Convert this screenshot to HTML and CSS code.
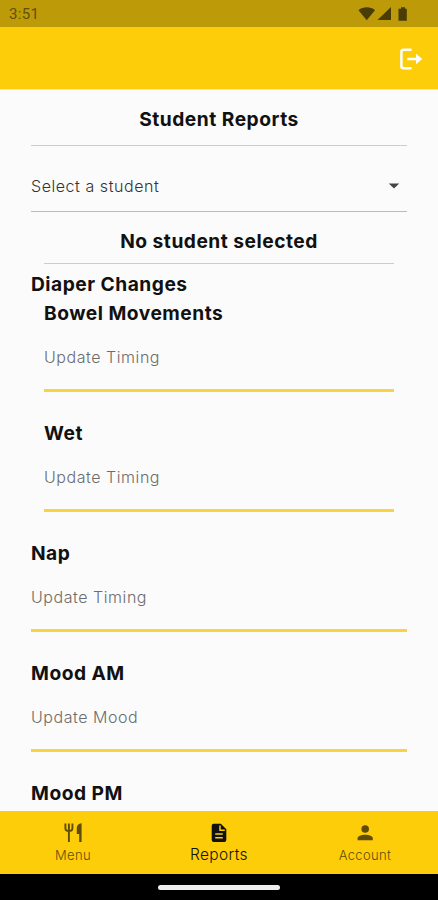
FILE: index.html
```html
<!DOCTYPE html>
<html lang="en">
<head>
    <meta charset="UTF-8">
    <meta name="viewport" content="width=device-width, initial-scale=1.0">
    <title>Student Reports</title>
    <link rel="stylesheet" href="styles.css">
</head>
<body>
    <div class="status-bar">
        <span class="clock">3:51</span>
        <svg class="status-icons" width="52" height="16" viewBox="0 0 52 16">
            <path d="M0.5 4.2C5 0.4 12.5 0.4 17 4.2L8.7 14.2Z"/>
            <path d="M19.5 14L33 1V14Z"/>
            <path d="M43 1.2h4v1.5h1.8v12H40.5v-12H43z"/>
        </svg>
    </div>
    <header class="app-bar">
        <button class="logout" aria-label="Log out">
            <svg width="24" height="24" viewBox="0 0 24 24">
                <path d="M12.6 2.8H4.4Q2.4 2.8 2.4 4.8V19.2Q2.4 21.2 4.4 21.2H12.6" fill="none" stroke="#fff" stroke-width="2.5"/>
                <path d="M8.3 10.7H17V6.8L23.3 12L17 17.2V13.3H8.3Z" fill="#fff"/>
            </svg>
        </button>
    </header>
    <main class="content">
        <h1 class="title">Student Reports</h1>
        <div class="select">
            <span>Select a student</span>
            <svg width="12" height="6" viewBox="0 0 12 6"><path d="M0.8 0.5H11.2L6 5.6Z" fill="#444"/></svg>
        </div>
        <h2 class="selected">No student selected</h2>
        <h2 class="group-title">Diaper Changes</h2>
        <div class="field inset">
            <h2>Bowel Movements</h2>
            <div class="input">Update Timing</div>
        </div>
        <div class="field inset">
            <h2>Wet</h2>
            <div class="input">Update Timing</div>
        </div>
        <div class="field">
            <h2>Nap</h2>
            <div class="input">Update Timing</div>
        </div>
        <div class="field">
            <h2>Mood AM</h2>
            <div class="input">Update Mood</div>
        </div>
        <div class="field">
            <h2>Mood PM</h2>
        </div>
    </main>
    <nav class="tabs">
        <a class="tab">
            <svg width="20" height="22" viewBox="0 0 20 22">
                <path d="M2.4 1.5V6.5Q2.4 9 5.9 9Q9.4 9 9.4 6.5V1.5M5.9 1.5V20" fill="none" stroke="currentColor" stroke-width="1.9"/>
                <path d="M18.6 1.2V20H16.2V12H13.8V6Q13.8 2 18.6 1.2Z" fill="currentColor"/>
            </svg>
            <span>Menu</span>
        </a>
        <a class="tab active">
            <svg width="20" height="22" viewBox="0 0 20 22">
                <path d="M4 1.8H11.8L17.3 7.3V18Q17.3 20 15.3 20H4.7Q2.7 20 2.7 18V3.8Q2.7 1.8 4.7 1.8Z" fill="currentColor"/>
                <path d="M11 3.4V8.2H15.8M6.2 12H13.8M6.2 15.8H13.8" fill="none" stroke="#fdcd09" stroke-width="1.5"/>
            </svg>
            <span>Reports</span>
        </a>
        <a class="tab">
            <svg width="20" height="22" viewBox="0 0 20 22">
                <circle cx="10.2" cy="7" r="3.8" fill="currentColor"/>
                <path d="M2.6 18.2V16.5C2.6 11.6 17.8 11.6 17.8 16.5V18.2Z" fill="currentColor"/>
            </svg>
            <span>Account</span>
        </a>
    </nav>
    <div class="home-bar">
        <div class="home-pill"></div>
    </div>
</body>
</html>
```
FILE: styles.css
```css
body {
    font-family: Inter, Roboto, sans-serif;
    margin: 0;
    height: 900px;
    display: flex;
    flex-direction: column;
    overflow: hidden;
    background-color: #fbfbfb;
    color: #111;
}

.status-bar {
    flex: none;
    box-sizing: border-box;
    height: 27px;
    padding: 1px 28px 0 9px;
    display: flex;
    align-items: center;
    justify-content: space-between;
    background-color: #bd9a08;
    color: #634f05;
}

.clock {
    font-family: Roboto, sans-serif;
    font-size: 15px;
    letter-spacing: 0.3px;
}

.status-icons {
    fill: #493c04;
}

.app-bar {
    flex: none;
    box-sizing: border-box;
    height: 63px;
    padding: 1px 15px 0 0;
    display: flex;
    align-items: center;
    justify-content: flex-end;
    background-color: #fdcd09;
    border-bottom: 1px solid #fde9a0;
}

.logout {
    display: flex;
    padding: 0;
    border: none;
    background: none;
}

.content {
    flex: 1;
    min-height: 0;
    overflow: hidden;
    padding: 0 31px;
}

h1,
h2 {
    margin: 0;
    font-size: 19.2px;
    font-weight: 650;
    line-height: 24px;
    letter-spacing: 0.5px;
}

.title {
    padding: 17px 0 14px;
    text-align: center;
    border-bottom: 1px solid #ccc;
}

.select {
    box-sizing: border-box;
    height: 66px;
    padding: 14px 7px 0 0;
    display: flex;
    align-items: center;
    justify-content: space-between;
    border-bottom: 1px solid #bbb;
    font-size: 16px;
    font-weight: 300;
    letter-spacing: 0.55px;
    color: #333;
}

.selected {
    margin: 0 13px;
    padding: 17px 0 10px;
    text-align: center;
    border-bottom: 1px solid #ccc;
}

.group-title {
    padding: 8px 0 5px;
}

.field {
    height: 120px;
}

.inset {
    margin: 0 13px;
}

.input {
    box-sizing: border-box;
    height: 67px;
    padding-top: 22px;
    font-size: 16px;
    font-weight: 300;
    line-height: 20px;
    letter-spacing: 0.55px;
    color: #6c6c6c;
    border-bottom: 3px solid #fbd340;
}

.tabs {
    flex: none;
    height: 63px;
    display: flex;
    background-color: #fdcd09;
}

.tab {
    flex: 1;
    display: flex;
    flex-direction: column;
    align-items: center;
    padding-top: 11px;
    font-size: 13px;
    font-weight: 300;
    line-height: 23px;
    letter-spacing: 0.35px;
    color: #5f4d05;
}

.tab.active {
    font-size: 15.5px;
    line-height: 21px;
    color: #111;
}

.home-bar {
    flex: none;
    height: 26px;
    display: flex;
    align-items: center;
    justify-content: center;
    background-color: #000;
}

.home-pill {
    width: 122px;
    height: 5px;
    border-radius: 3px;
    background-color: #eee;
}
```
